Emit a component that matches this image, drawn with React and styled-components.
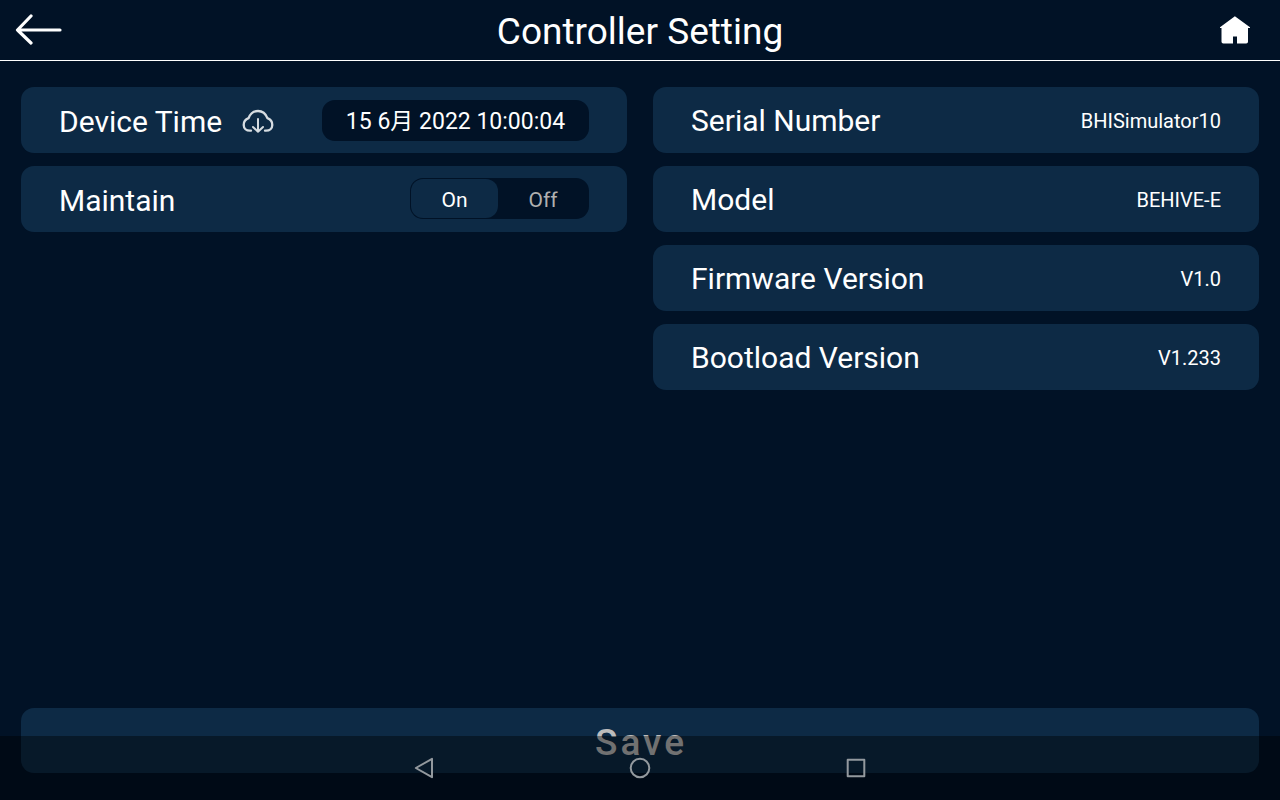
import React, { useState } from "react";
import styled, { createGlobalStyle } from "styled-components";

const navy = "#011226";
const panel = "#0d2a45";

const GlobalStyle = createGlobalStyle`
  *, *::before, *::after { box-sizing: border-box; }
  body {
    margin: 0;
    background: ${navy};
    color: #fff;
    font-family: Roboto, "Noto Sans CJK SC", sans-serif;
  }
  button { font-family: inherit; color: inherit; cursor: pointer; }
`;

const Page = styled.div`
  min-height: 100vh;
  display: flex;
  flex-direction: column;
`;

const Header = styled.header`
  display: grid;
  grid-template-columns: 80px 1fr 80px;
  align-items: center;
  height: 61px;
  border-bottom: 1px solid #fff;
`;

const Title = styled.h1`
  margin: 0;
  padding-top: 4px;
  text-align: center;
  font-size: 37px;
  line-height: 44px;
  font-weight: 400;
`;

const IconButton = styled.button`
  display: flex;
  align-items: center;
  justify-content: ${(p) => p.$justify || "center"};
  padding: ${(p) => p.$padding || "0"};
  border: 0;
  background: none;
`;

const Settings = styled.main`
  flex: 1;
  display: grid;
  grid-template-columns: 1fr 1fr;
  column-gap: 26px;
  padding: 26px 21px 0;
`;

const Column = styled.section`
  display: flex;
  flex-direction: column;
  gap: 13px;
`;

const Card = styled.div`
  display: flex;
  align-items: center;
  justify-content: space-between;
  height: 66px;
  padding: 2px 38px 0;
  border-radius: 13px;
  background: ${panel};
`;

const LabelGroup = styled.div`
  display: flex;
  align-items: center;
  gap: 20px;
  padding-top: 2px;
`;

const Label = styled.span`
  font-size: 30px;
  line-height: 36px;
`;

const Value = styled.span`
  font-size: 20px;
  line-height: 24px;
`;

const TimeButton = styled.button`
  min-width: 267px;
  height: 41px;
  margin-bottom: 2px;
  padding: 4px 22px 0;
  border: 0;
  border-radius: 13px;
  background: ${navy};
  font-size: 23px;
  line-height: 28px;
  white-space: nowrap;
`;

const Switch = styled.div`
  display: grid;
  grid-template-columns: 87px 1fr;
  width: 179px;
  height: 41px;
  padding: 1px;
  margin-bottom: 4px;
  border-radius: 13px;
  background: ${navy};
`;

const Choice = styled.label`
  display: flex;
  align-items: center;
  justify-content: center;
  padding-top: 3px;
  border-radius: 12px;
  background: ${(p) => (p.$active ? panel : "transparent")};
  color: ${(p) => (p.$active ? "#fff" : "#b0b0b0")};
  font-size: 21px;
  line-height: 26px;
  cursor: pointer;
`;

const HiddenRadio = styled.input`
  position: absolute;
  opacity: 0;
  pointer-events: none;
`;

const Footer = styled.footer`
  padding: 0 21px 27px;
`;

const SaveButton = styled.button`
  display: block;
  width: 100%;
  height: 65px;
  padding: 4px 0 0 2px;
  border: 0;
  border-radius: 13px;
  background: ${panel};
  && { color: #bcbcbc; }
  font-size: 37px;
  line-height: 44px;
  font-weight: 500;
  letter-spacing: 3px;
`;

const SystemBar = styled.nav`
  position: fixed;
  inset: auto 0 0;
  display: flex;
  align-items: center;
  justify-content: center;
  gap: 152px;
  height: 64px;
  background: rgba(0, 0, 0, 0.4);
`;

const SystemButton = styled.button`
  display: flex;
  align-items: center;
  justify-content: center;
  width: 64px;
  height: 64px;
  padding: 0;
  border: 0;
  background: none;
`;

const SystemIcon = ({ children }) => (
  <svg width="24" height="24" viewBox="0 0 24 24" fill="none" stroke="#93999e" strokeWidth="2" strokeLinejoin="round">
    {children}
  </svg>
);

const BackArrow = () => (
  <svg width="48" height="32" viewBox="0 0 48 32" fill="none" stroke="#fff" strokeWidth="3.2" strokeLinecap="round" strokeLinejoin="round">
    <path d="M16 2 2.500 16 16 29M2.500 16H45" />
  </svg>
);

const HomeIcon = () => (
  <svg width="32" height="28" viewBox="0 0 32 28" fill="#fff">
    <path d="M15.9.3 31 11.3v.8h-2v13.6q0 1.800-1.800 1.800H18v-7h-4v7H4.3q-1.800 0-1.800-1.800V12.1H1v-.8z" />
  </svg>
);

const CloudDownload = () => (
  <svg width="32" height="26" viewBox="0 0 32 26" fill="none" stroke="#d6dce1" strokeWidth="2.3" strokeLinecap="round" strokeLinejoin="round">
    <path d="M9 21.700H8C4.300 21.700 1.700 19.200 1.700 16 1.700 12.800 3.500 10.300 6.600 9.200 8.300 4.700 11.300 2 16 2s7.700 2.700 9.400 7.200c3.100 1.100 4.900 3.600 4.900 6.800 0 3.200-2.600 5.700-6.300 5.700h-1" />
    <path d="M16 10V22.800M11 18 16 22.800l5-4.800" strokeWidth="2" />
  </svg>
);

const deviceInfo = [
  ["Serial Number", "BHISimulator10"],
  ["Model", "BEHIVE-E"],
  ["Firmware Version", "V1.0"],
  ["Bootload Version", "V1.233"],
];

export default function App() {
  const [maintain, setMaintain] = useState("On");

  return (
    <Page>
      <GlobalStyle />
      <Header>
        <IconButton aria-label="Back" $justify="flex-start" $padding="0 0 0 15px">
          <BackArrow />
        </IconButton>
        <Title>Controller Setting</Title>
        <IconButton aria-label="Home" $justify="flex-end" $padding="0 29px 0 0">
          <HomeIcon />
        </IconButton>
      </Header>

      <Settings>
        <Column>
          <Card>
            <LabelGroup>
              <Label id="device-time">Device Time</Label>
              <IconButton aria-label="Sync time">
                <CloudDownload />
              </IconButton>
            </LabelGroup>
            <TimeButton aria-describedby="device-time">15 6月 2022 10:00:04</TimeButton>
          </Card>
          <Card>
            <LabelGroup>
              <Label id="maintain">Maintain</Label>
            </LabelGroup>
            <Switch role="radiogroup" aria-labelledby="maintain">
              {["On", "Off"].map((option) => (
                <Choice key={option} $active={maintain === option}>
                  <HiddenRadio
                    type="radio"
                    name="maintain"
                    value={option}
                    checked={maintain === option}
                    onChange={() => setMaintain(option)}
                  />
                  {option}
                </Choice>
              ))}
            </Switch>
          </Card>
        </Column>
        <Column>
          {deviceInfo.map(([name, value]) => (
            <Card key={name}>
              <Label>{name}</Label>
              <Value>{value}</Value>
            </Card>
          ))}
        </Column>
      </Settings>

      <Footer>
        <SaveButton>Save</SaveButton>
      </Footer>

      <SystemBar aria-label="System navigation">
        <SystemButton aria-label="System back">
          <SystemIcon>
            <path d="M20 2.800V21.200L3.800 12z" />
          </SystemIcon>
        </SystemButton>
        <SystemButton aria-label="System home">
          <SystemIcon>
            <circle cx="12" cy="12" r="9.300" />
          </SystemIcon>
        </SystemButton>
        <SystemButton aria-label="Recent apps">
          <SystemIcon>
            <rect x="3.700" y="3.700" width="16.600" height="16.600" />
          </SystemIcon>
        </SystemButton>
      </SystemBar>
    </Page>
  );
}
